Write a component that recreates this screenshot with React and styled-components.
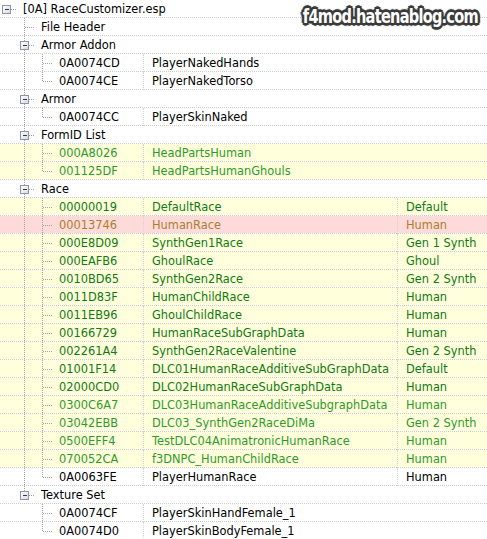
import React from "react";
import styled, { createGlobalStyle } from "styled-components";

const GlobalStyle = createGlobalStyle`
  html, body { margin: 0; padding: 0; background: #ffffff; }
  body { font-family: "DejaVu Sans", "Noto Sans", sans-serif; }
`;

const INDENT = 18;
const ROW_H = 18;

const COLORS = {
  plain: { bg: "transparent", fg: "#000000" },
  green: { bg: "#ffffdc", fg: "#0f7a14" },
  lime: { bg: "#ffffdc", fg: "#2f9a2c" },
  conflict: { bg: "#ffdada", fg: "#a8812c" },
};

const Page = styled.div`
  position: relative;
  width: 487px;
  height: 539px;
  overflow: hidden;
  background: #ffffff;
`;

const Tree = styled.div`
  display: flex;
  flex-direction: column;
  font-size: 11.4px;
`;

const Row = styled.div`
  display: grid;
  grid-template-columns: 143px 254px 1fr;
  height: ${ROW_H}px;
  box-sizing: border-box;
  border-bottom: 1px dotted #cdcdcd;
  background-color: ${(p) => COLORS[p.$tone].bg};
  background-clip: padding-box;
  color: ${(p) => COLORS[p.$tone].fg};
  line-height: ${ROW_H - 1}px;
  white-space: nowrap;
`;

const TreeCell = styled.div`
  display: flex;
  align-items: stretch;
  overflow: visible;
  white-space: nowrap;
`;

const Label = styled.span`
  padding-left: 1px;
  position: relative;
  top: 1px;
`;

const Cell = styled.div`
  box-sizing: border-box;
  padding-left: 8px;
  padding-top: 1px;
  line-height: ${ROW_H - 2}px;
  border-left: ${(p) => (p.$ruled ? "1px dotted #d4d4d4" : "1px solid transparent")};
  overflow: hidden;
`;

const Watermark = styled.div`
  position: absolute;
  top: 5px;
  right: 9px;
  transform: scaleX(0.83);
  transform-origin: right center;
  font-family: "DejaVu Sans Condensed", "DejaVu Sans", sans-serif;
  font-weight: bold;
  font-size: 19.5px;
  letter-spacing: -0.9px;
  color: #ffffff;
  text-shadow:
    2px 0 0 #3a3a3a, -2px 0 0 #3a3a3a, 0 2px 0 #3a3a3a, 0 -2px 0 #3a3a3a,
    2px 2px 0 #3a3a3a, -2px -2px 0 #3a3a3a, 2px -2px 0 #3a3a3a, -2px 2px 0 #3a3a3a,
    3px 0 1px #4a4a4a, -3px 0 1px #4a4a4a, 0 3px 1px #4a4a4a, 0 -3px 1px #4a4a4a;
`;

// Dotted tree connectors and the expander box for one row.
function Guides({ level, last, box, trunks, stubOnly }) {
  const cx = level * INDENT + 6;
  const w = level * INDENT + 22;
  const mid = 9.5;
  const dot = { stroke: "#a3a3a3", strokeWidth: 1, strokeDasharray: "1 1", shapeRendering: "crispEdges" };
  return (
    <svg width={w} height={ROW_H} style={{ flex: "none" }}>
      {trunks.map((on, i) =>
        on ? <line key={i} x1={i * INDENT + 6.5} y1={0} x2={i * INDENT + 6.5} y2={ROW_H} {...dot} /> : null
      )}
      {!stubOnly && (
        <line x1={cx + 0.5} y1={0} x2={cx + 0.5} y2={last ? mid : ROW_H} {...dot} />
      )}
      <line x1={cx + (box ? 5 : 1)} y1={mid} x2={cx + 11} y2={mid} {...dot} />
      {box && (
        <g shapeRendering="crispEdges">
          <defs>
            <linearGradient id={`bx${level}`} x1="0" y1="0" x2="1" y2="1">
              <stop offset="0" stopColor="#ffffff" />
              <stop offset="1" stopColor="#d6dbe2" />
            </linearGradient>
          </defs>
          <rect x={cx - 3.5} y={5.5} width={8} height={8} fill={`url(#bx${level})`} stroke="#8c97a6" />
          <line x1={cx - 1.5} y1={9.5} x2={cx + 2.5} y2={9.5} stroke="#2c3a55" />
        </g>
      )}
    </svg>
  );
}

const rows = [
  { level: 0, label: "[0A] RaceCustomizer.esp", box: true, root: true },
  { level: 1, label: "File Header" },
  { level: 1, label: "Armor Addon", box: true },
  { level: 2, label: "0A0074CD", name: "PlayerNakedHands" },
  { level: 2, label: "0A0074CE", name: "PlayerNakedTorso", last: true },
  { level: 1, label: "Armor", box: true },
  { level: 2, label: "0A0074CC", name: "PlayerSkinNaked", last: true },
  { level: 1, label: "FormID List", box: true },
  { level: 2, label: "000A8026", name: "HeadPartsHuman", tone: "lime" },
  { level: 2, label: "001125DF", name: "HeadPartsHumanGhouls", tone: "lime", last: true },
  { level: 1, label: "Race", box: true },
  { level: 2, label: "00000019", name: "DefaultRace", type: "Default", tone: "green" },
  { level: 2, label: "00013746", name: "HumanRace", type: "Human", tone: "conflict" },
  { level: 2, label: "000E8D09", name: "SynthGen1Race", type: "Gen 1 Synth", tone: "green" },
  { level: 2, label: "000EAFB6", name: "GhoulRace", type: "Ghoul", tone: "green" },
  { level: 2, label: "0010BD65", name: "SynthGen2Race", type: "Gen 2 Synth", tone: "green" },
  { level: 2, label: "0011D83F", name: "HumanChildRace", type: "Human", tone: "green" },
  { level: 2, label: "0011EB96", name: "GhoulChildRace", type: "Human", tone: "green" },
  { level: 2, label: "00166729", name: "HumanRaceSubGraphData", type: "Human", tone: "green" },
  { level: 2, label: "002261A4", name: "SynthGen2RaceValentine", type: "Gen 2 Synth", tone: "green" },
  { level: 2, label: "01001F14", name: "DLC01HumanRaceAdditiveSubGraphData", type: "Default", tone: "green" },
  { level: 2, label: "02000CD0", name: "DLC02HumanRaceSubGraphData", type: "Human", tone: "green" },
  { level: 2, label: "0300C6A7", name: "DLC03HumanRaceAdditiveSubgraphData", type: "Human", tone: "lime" },
  { level: 2, label: "03042EBB", name: "DLC03_SynthGen2RaceDiMa", type: "Gen 2 Synth", tone: "lime" },
  { level: 2, label: "0500EFF4", name: "TestDLC04AnimatronicHumanRace", type: "Human", tone: "lime" },
  { level: 2, label: "070052CA", name: "f3DNPC_HumanChildRace", type: "Human", tone: "lime" },
  { level: 2, label: "0A0063FE", name: "PlayerHumanRace", type: "Human", last: true },
  { level: 1, label: "Texture Set", box: true, last: true },
  { level: 2, label: "0A0074CF", name: "PlayerSkinHandFemale_1", parentLast: true },
  { level: 2, label: "0A0074D0", name: "PlayerSkinBodyFemale_1", parentLast: true, last: true },
];

export default function App() {
  return (
    <Page>
      <GlobalStyle />
      <Tree>
        {rows.map((r, i) => {
          const record = r.name !== undefined;
          const trunks = r.level === 2 ? [false, !r.parentLast] : [];
          return (
            <Row key={i} $tone={r.tone || "plain"}>
              <TreeCell>
                <Guides level={r.level} last={r.last} box={r.box} trunks={trunks} stubOnly={r.root} />
                <Label>{r.label}</Label>
              </TreeCell>
              <Cell $ruled={record}>{r.name || ""}</Cell>
              <Cell $ruled={record && r.type !== undefined}>{r.type || ""}</Cell>
            </Row>
          );
        })}
      </Tree>
      <Watermark>f4mod.hatenablog.com</Watermark>
    </Page>
  );
}
